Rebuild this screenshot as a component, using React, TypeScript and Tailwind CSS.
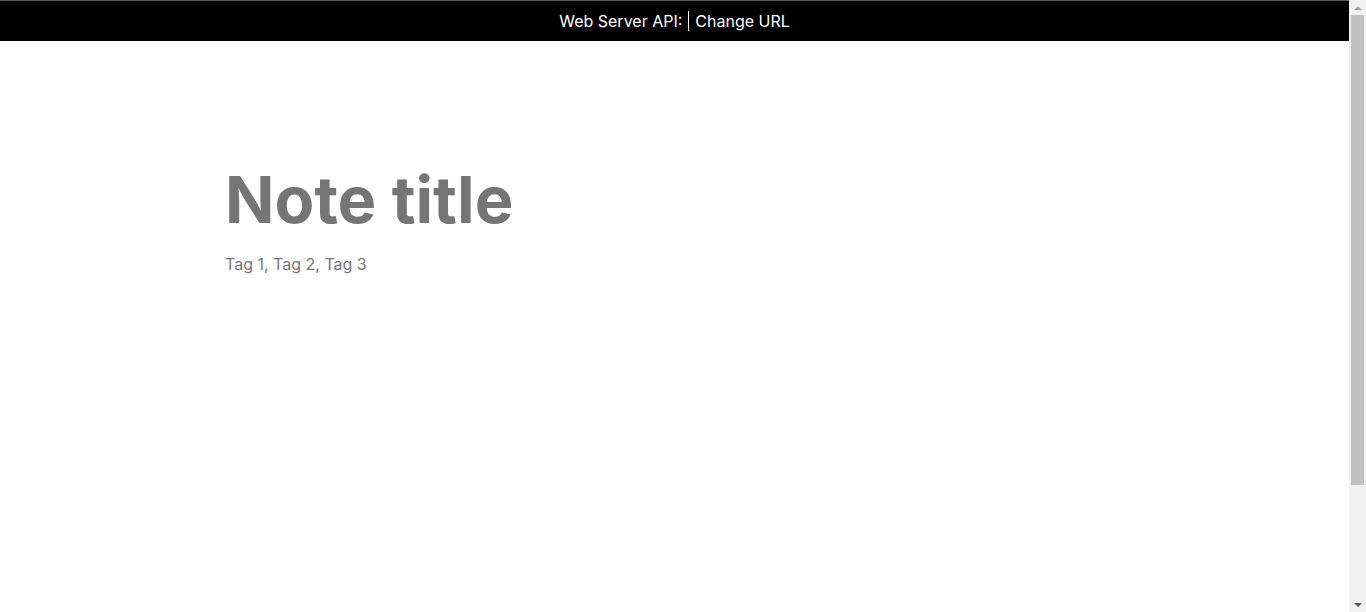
export default function App() {
  return (
    <div className="flex h-[612px] overflow-hidden bg-white font-['Inter',sans-serif]">
      <div className="min-w-0 flex-1">
        <header className="flex h-[41px] items-center justify-center border-t border-[#5a5a5a] bg-black text-base text-white">
          <span>Web Server API:</span>
          <span className="mx-[6px] h-[20px] w-px bg-white" aria-hidden />
          <button type="button" className="cursor-pointer">
            Change URL
          </button>
        </header>
        <main className="px-[225px] pt-[120px]">
          <h1 className="text-[65px] font-bold leading-[1.2] text-[#757575]">
            Note title
          </h1>
          <p className="mt-[13px] text-base leading-6 text-[#757575]">Tag 1, Tag 2, Tag 3</p>
        </main>
      </div>
      {/* page scrollbar */}
      <div className="flex w-[17px] shrink-0 flex-col items-center bg-[#f1f1f1]" aria-hidden>
        <div className="flex h-[15px] items-center justify-center">
          <span className="h-0 w-0 border-x-[4px] border-b-[4px] border-x-transparent border-b-[#a3a3a3]" />
        </div>
        <div className="h-[470px] w-[13px] bg-[#c1c1c1]" />
        <div className="flex-1" />
        <div className="flex h-[15px] items-center justify-center">
          <span className="h-0 w-0 border-x-[4px] border-t-[4px] border-x-transparent border-t-[#505050]" />
        </div>
      </div>
    </div>
  );
}
